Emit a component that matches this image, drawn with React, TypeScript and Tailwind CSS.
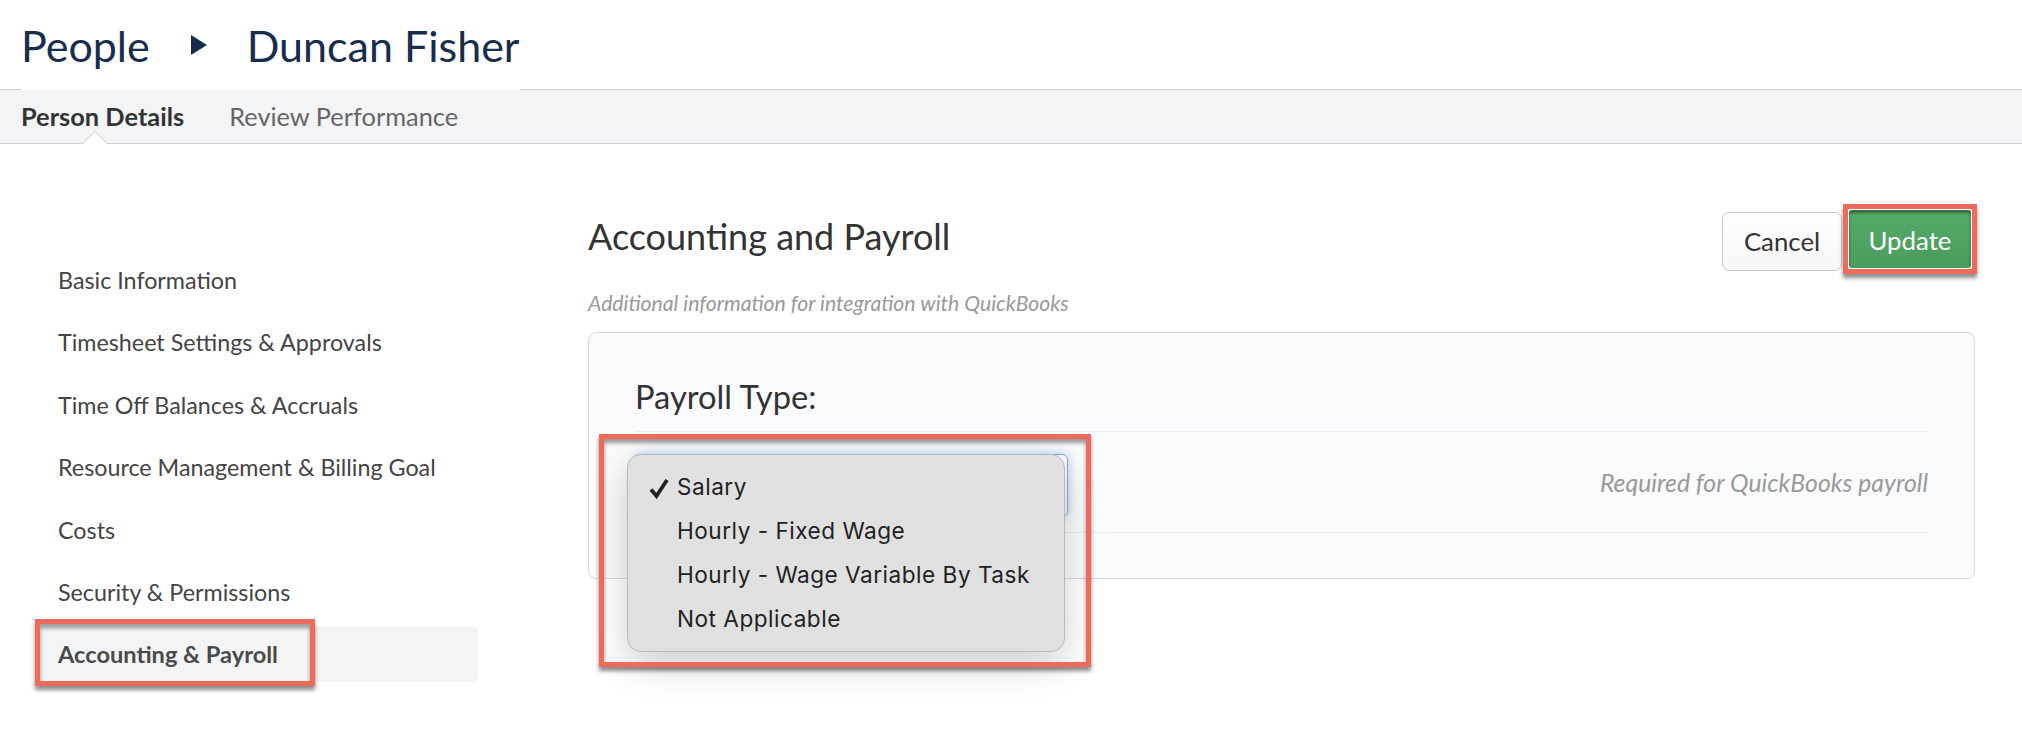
const SECTIONS = [
  "Basic Information",
  "Timesheet Settings & Approvals",
  "Time Off Balances & Accruals",
  "Resource Management & Billing Goal",
  "Costs",
  "Security & Permissions",
  "Accounting & Payroll",
];

const PAYROLL_OPTIONS = ["Salary", "Hourly - Fixed Wage", "Hourly - Wage Variable By Task", "Not Applicable"];

const HIGHLIGHT =
  "absolute border-[5px] border-[#ee6a5a] shadow-[0_4px_4px_rgba(0,0,0,0.45),inset_0_4px_4px_rgba(0,0,0,0.4)] pointer-events-none";

function PayrollMenu() {
  return (
    <div className="absolute left-[-8px] top-[0px] z-10 w-[438px] h-[198px] rounded-[14px] border border-[#b9b9b9] bg-[#e0e0e0] shadow-[0_12px_36px_rgba(0,0,0,0.2)] pt-[10px] font-['Inter',sans-serif] text-[22.6px] text-[#222] tracking-[0.5px]">
      {PAYROLL_OPTIONS.map((opt, i) => (
        <div key={opt} className="relative h-[44px] pl-[49px] flex items-center">
          {i === 0 && (
            <svg className="absolute left-[21px] top-[12px]" width="20" height="22" viewBox="0 0 20 22">
              <path d="M2 12.5 L7.5 19 L18 3" fill="none" stroke="#222" strokeWidth="3.8" />
            </svg>
          )}
          {opt}
        </div>
      ))}
    </div>
  );
}

export default function App() {
  return (
    <div className="w-[2022px] h-[732px] overflow-hidden bg-white font-['Lato',sans-serif] relative">
      <header className="h-[89px]">
        <div className="relative z-10 ml-[21px] w-[499px] h-[90px] bg-white flex items-center whitespace-nowrap text-[#182d4d] text-[43px] leading-none">
          <span>People</span>
          <svg className="ml-[41px] mr-[40px] shrink-0" width="16" height="20" viewBox="0 0 16 20">
            <path d="M0 0 L16 10 L0 20 Z" fill="#182d4d" />
          </svg>
          <span>Duncan Fisher</span>
        </div>
      </header>

      <nav className="relative h-[55px] bg-[#f3f4f6] border-y border-[#cdcfd2] flex items-center pl-[21px] gap-[45px] text-[25.4px]">
        <span className="font-bold text-[#333]">Person Details</span>
        <span className="text-[#666]">Review Performance</span>
        <svg className="absolute left-[82px] bottom-[-1px]" width="26" height="14" viewBox="0 0 26 14">
          <path d="M0 14 L13 1 L26 14 Z" fill="#fff" />
          <path d="M0 14 L13 1 L26 14" fill="none" stroke="#d4d5d8" strokeWidth="1.2" />
        </svg>
      </nav>

      <div className="flex">
        <aside className="relative ml-[40px] w-[438px] pt-[109px] flex flex-col gap-[7.4px] text-[23.3px] text-[#444]">
          {SECTIONS.map((s, i) => (
            <div
              key={s}
              className={`h-[55px] pl-[18px] flex items-center rounded-[4px] ${
                i === SECTIONS.length - 1 ? "bg-[#f3f4f6] font-bold text-[#4a4a4a] text-[23.6px]" : ""
              }`}
            >
              {s}
            </div>
          ))}
          <div className={`${HIGHLIGHT} left-[-5px] top-[475px] w-[280px] h-[67px]`} />
        </aside>

        <main className="ml-[110px] w-[1387px]">
          <div className="flex justify-between items-start pt-[60px]">
            <div>
              <h1 className="text-[36px] leading-[48px] mt-[8px] text-[#333]">Accounting and Payroll</h1>
              <p className="mt-[31px] text-[21.2px] leading-[24px] italic text-[#999]">
                Additional information for integration with QuickBooks
              </p>
            </div>
            <div className="flex items-start mr-[-2px]">
              <button className="mt-[8px] mr-px w-[120px] h-[59px] rounded-[7px] border border-[#c8c8c8] bg-gradient-to-b from-white to-[#f6f6f6] text-[25.8px] text-[#333]">
                Cancel
              </button>
              <div className="relative border-[5px] border-[#ee6a5a] shadow-[0_4px_4px_rgba(0,0,0,0.45)] w-[134px] h-[70px] p-px">
                <button className="w-full h-full rounded-[3px] bg-gradient-to-b from-[#56aa68] to-[#4a9c5c] shadow-[inset_0_3px_3px_rgba(0,0,0,0.4)] text-[25.8px] pt-[3px] text-white">
                  Update
                </button>
              </div>
            </div>
          </div>

          <section className="mt-[17px] h-[247px] rounded-[8px] border border-[#d6d9de] bg-[#fafbfd] pt-[42px] px-[46px]">
            <h2 className="text-[32.7px] leading-[44px] text-[#333] pb-[12px] border-b border-[#eceef1]">Payroll Type:</h2>
            <div className="relative h-[101px] border-b border-[#eceef1] flex items-center justify-end">
              <div className="absolute left-0 top-[22px] w-[433px] h-[63px] rounded-[6px] border border-[#7fb0e6] shadow-[0_0_8px_rgba(100,160,230,0.5)]" />
              <div className="absolute left-0 top-[22px]">
                <PayrollMenu />
              </div>
              <span className="italic text-[24.8px] text-[#999] pt-[2px]">Required for QuickBooks payroll</span>
            </div>
          </section>
          <div className={`${HIGHLIGHT} left-[599px] top-[434px] w-[492px] h-[233px] z-20`} />
        </main>
      </div>
    </div>
  );
}
